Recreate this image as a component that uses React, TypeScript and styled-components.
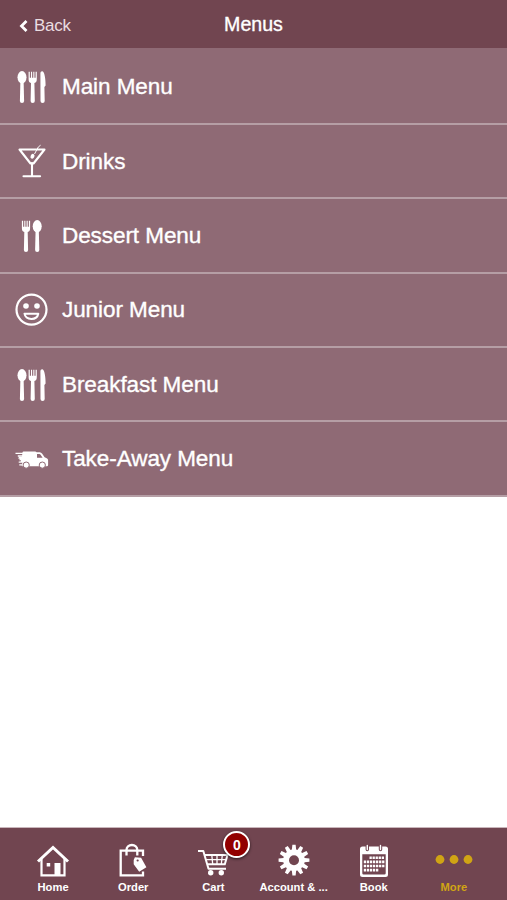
import React from "react";
import styled, { createGlobalStyle } from "styled-components";

const GlobalStyle = createGlobalStyle`
  * { box-sizing: border-box; }
  html, body { margin: 0; background: #fff; }
  body { font-family: "Liberation Sans", Arial, sans-serif; color: #fff; }
`;

const Screen = styled.div`
  display: flex;
  flex-direction: column;
  height: 100vh;
  overflow: hidden;
  background: #fff;
`;

const Header = styled.header`
  flex: none;
  display: grid;
  grid-template-columns: 1fr auto 1fr;
  align-items: start;
  height: 48px;
  background: #714550;
`;

const BackButton = styled.button`
  display: flex;
  align-items: center;
  gap: 5px;
  margin: 16px 0 0 19px;
  padding: 0;
  border: 0;
  background: none;
  color: #eadde1;
  font: 17px/20px "Liberation Sans", Arial, sans-serif;
  letter-spacing: -0.25px;
`;

const Title = styled.h1`
  margin: 12px 0 0;
  font-size: 19.6px;
  line-height: 24px;
  font-weight: 400;
  -webkit-text-stroke: 0.35px #fff;
`;

const MenuList = styled.nav`
  flex: none;
  display: flex;
  flex-direction: column;
  padding-top: 2.5px;
  background: #8f6a75;
`;

const MenuRow = styled.a`
  display: flex;
  align-items: center;
  height: 74.4px;
  padding-top: 1px;
  background: #8f6a75;
  border-bottom: 2px solid #b59ea5;
`;

const MenuIcon = styled.svg`
  flex: none;
  width: 62px;
  height: 74px;
  fill: #fff;
`;

const MenuLabel = styled.span`
  font-size: 22.5px;
  line-height: 28px;
  letter-spacing: -0.07px;
  -webkit-text-stroke: 0.35px #fff;
`;

const Content = styled.main`
  flex: 1;
`;

const TabBar = styled.footer`
  flex: none;
  display: grid;
  grid-template-columns: repeat(6, 1fr);
  height: 73px;
  padding: 0 13px;
  background: #714550;
  border-top: 1px solid #c9b6bb;
`;

const Tab = styled.a<{ $active?: boolean }>`
  position: relative;
  display: flex;
  flex-direction: column;
  align-items: center;
  padding-top: 12px;
  color: ${(p) => (p.$active ? "#d0a414" : "#fff")};
`;

const TabIcon = styled.svg`
  width: 40px;
  height: 40px;
  fill: currentColor;
`;

const TabLabel = styled.span`
  margin-top: 1px;
  font-size: 11.2px;
  line-height: 13px;
  font-weight: 700;
  white-space: nowrap;
`;

const Badge = styled.span`
  position: absolute;
  top: 3px;
  left: 50%;
  margin-left: 10px;
  width: 27px;
  height: 27px;
  border: 2px solid #fff;
  border-radius: 50%;
  background: #920000;
  box-shadow: 0 1px 3px rgba(0, 0, 0, 0.65);
  font-size: 14px;
  line-height: 24px;
  font-weight: 700;
  text-align: center;
`;

const Spoon = ({ x }: { x: number }) => (
  <g transform={`translate(${x} 0)`}>
    <ellipse cx="0" cy="27.3" rx="4.5" ry="6.2" />
    <path d="M-1.6 31h3.2l.5 20a2.1 2.1 0 0 1-4.2 0Z" />
  </g>
);

const Fork = ({ x }: { x: number }) => (
  <g transform={`translate(${x} 0)`}>
    <path d="M-4.1 21.8h1.2v6h1.2v-6h1.1v6h1.2v-6h1.1v6h1.2v-6h1.2v7.2c0 2.4-.6 3.5-2.4 4L2.1 51a2.1 2.1 0 0 1-4.2 0l.4-18c-1.8-.5-2.4-1.6-2.4-4Z" />
  </g>
);

const Cutlery = () => (
  <>
    <Spoon x={22} />
    <Fork x={32.7} />
    <path d="M40.4 23.2c0-1.5 1-2.2 2-2 2.2.8 3.2 7.5 3.2 14.3l-1.2 1.5.3 14a2.1 2.1 0 0 1-4.2 0Z" />
  </>
);

const Cocktail = () => (
  <g fill="none" stroke="#fff" strokeWidth="2.1">
    <path d="M19.5 24.5H44.5L33.5 38.5H30.5Z" strokeLinejoin="round" />
    <path d="M32 38v13M23.5 51.3h16.6" strokeLinecap="round" />
    <path d="M34.5 29l3.8-7 2.3-1.8" strokeWidth="1" />
    <ellipse cx="32.5" cy="31.3" rx="1.9" ry="2.5" transform="rotate(25 32.5 31.3)" fill="#fff" stroke="none" />
  </g>
);

const DessertCutlery = () => (
  <>
    <Fork x={26} />
    <Spoon x={37.2} />
  </>
);

const Smile = () => (
  <>
    <circle cx="31.5" cy="36.6" r="15" fill="none" stroke="#fff" strokeWidth="2.2" />
    <circle cx="26" cy="33" r="2.8" />
    <circle cx="37" cy="33" r="2.8" />
    <path d="M24.5 40.7h13.8c-.7 3.6-3.3 5.2-6.9 5.2s-6.3-1.6-6.9-5.2Z" fill="none" stroke="#fff" strokeWidth="2" strokeLinejoin="round" />
  </>
);

const Van = () => (
  <>
    <path d="M23.5 29.5h11.6q1 0 1.5.7h3.1q1.5 0 2.5 1.5l2.4 3.6 2.5 1.2q1 .6 1 2v4.5q0 1.3-1.3 1.3h-24q-1.3 0-1.1-1.3l1-3h-2.2l.5-1.7h-1.8l.6-1.6h-1.5l.6-2h3l.6-4.2q.1-1 1-1Z" />
    <path d="M15.5 31.4h8M17.8 34h5M18.7 40.2h5M19.3 42.8h4" stroke="#fff" strokeWidth="1.3" />
    <path d="M37 32h2.3q.8 0 1.3.8l2 3H37Z" fill="#8f6a75" />
    <circle cx="26.2" cy="43.1" r="3.1" stroke="#8f6a75" strokeWidth="1" />
    <circle cx="42.3" cy="43.1" r="3.1" stroke="#8f6a75" strokeWidth="1" />
  </>
);

const HomeIcon = () => (
  <>
    <path d="M5 21.5 20 7.5l15 14" fill="none" stroke="currentColor" strokeWidth="3" />
    <path d="M8.5 19v16.3h23V19" fill="none" stroke="currentColor" strokeWidth="2.2" />
    <path d="M21.5 23h6v12h-6ZM13.7 23h3.5v3.5h-3.5Z" />
  </>
);

const BagIcon = () => (
  <>
    <path d="M30 16v-5.3H7.7v24.6H30V31.5" fill="none" stroke="currentColor" strokeWidth="2.3" />
    <path d="M13.5 15.5V10a5.4 5 0 0 1 10.8 0v5.5" fill="none" stroke="currentColor" strokeWidth="2.3" />
    <path fillRule="evenodd" d="m20.7 20 1.2-2.8 6.2.6 5.3 9.4-7.2 4.6-5.5-7.5Zm3.9-.6a1.1 1.1 0 1 0 .1 2.2 1.1 1.1 0 0 0-.1-2.2Z" />
  </>
);

const CartIcon = () => (
  <>
    <g fill="none" stroke="currentColor" strokeWidth="2">
      <path d="M5 11h5.3l5.2 17.7H33" strokeLinejoin="round" />
      <path d="M11.5 15H34.5l-2.7 9.2H14.5" />
      <path d="M12.8 19.6h20.2M18.8 15l.9 9.2M24 15v9.2M29.3 15l-1 9.2" strokeWidth="1.3" />
    </g>
    <circle cx="17.7" cy="32.7" r="2.7" />
    <circle cx="28.3" cy="32.7" r="2.7" />
  </>
);

const gearPoints = Array.from({ length: 12 }, (_, i) =>
  [[-11.5, 10.8], [-6, 15.5], [6, 15.5], [11.5, 10.8]].map(([deg, r]) => {
    const a = ((i * 30 + deg) * Math.PI) / 180;
    return `${(20 + r * Math.sin(a)).toFixed(2)},${(20.2 - r * Math.cos(a)).toFixed(2)}`;
  })
).flat().join(" ");

const GearIcon = () => (
  <>
    <polygon points={gearPoints} />
    <circle cx="20" cy="20.2" r="5" fill="#714550" />
  </>
);

const CalendarIcon = () => (
  <>
    <path fillRule="evenodd" d="M8.5 6.5H31.5Q34 6.5 34 9v25.5Q34 37 31.5 37H8.5Q6 37 6 34.5V9Q6 6.5 8.5 6.5ZM8.3 14.3v18.9q0 1.3 1.3 1.3h20.8q1.3 0 1.3-1.3V14.3Z" />
    <path d="M15.5 17.8h15M9.8 21.9h20.7M9.8 26h20.7M9.8 30.1h14.5" fill="none" stroke="currentColor" strokeWidth="2.6" strokeDasharray="2.3 .75" />
    <g fill="none">
      <path d="M13.3 6v3.5M26.5 6v3.5" stroke="#714550" strokeWidth="3.4" strokeLinecap="round" />
      <path d="M13.3 5.5v4M26.5 5.5v4" stroke="#fff" strokeWidth="1.4" strokeLinecap="round" />
    </g>
  </>
);

const MoreIcon = () => (
  <>
    <circle cx="6" cy="19.5" r="4.4" />
    <circle cx="20" cy="19.5" r="4.4" />
    <circle cx="34" cy="19.5" r="4.4" />
  </>
);

const menus = [
  { label: "Main Menu", Icon: Cutlery },
  { label: "Drinks", Icon: Cocktail },
  { label: "Dessert Menu", Icon: DessertCutlery },
  { label: "Junior Menu", Icon: Smile },
  { label: "Breakfast Menu", Icon: Cutlery },
  { label: "Take-Away Menu", Icon: Van },
];

const tabs = [
  { label: "Home", Icon: HomeIcon },
  { label: "Order", Icon: BagIcon },
  { label: "Cart", Icon: CartIcon, badge: "0" },
  { label: "Account & ...", Icon: GearIcon },
  { label: "Book", Icon: CalendarIcon },
  { label: "More", Icon: MoreIcon, active: true },
];

export default function App() {
  return (
    <Screen>
      <GlobalStyle />
      <Header>
        <BackButton>
          <svg width="10" height="14" viewBox="0 0 10 14" fill="none">
            <path d="M7.5 2 2.5 7l5 5" stroke="#fff" strokeWidth="2.8" />
          </svg>
          Back
        </BackButton>
        <Title>Menus</Title>
      </Header>
      <MenuList>
        {menus.map(({ label, Icon }) => (
          <MenuRow key={label}>
            <MenuIcon viewBox="0 0 62 74"><Icon /></MenuIcon>
            <MenuLabel>{label}</MenuLabel>
          </MenuRow>
        ))}
      </MenuList>
      <Content />
      <TabBar>
        {tabs.map(({ label, Icon, badge, active }) => (
          <Tab key={label} $active={active}>
            <TabIcon viewBox="0 0 40 40"><Icon /></TabIcon>
            <TabLabel>{label}</TabLabel>
            {badge && <Badge>{badge}</Badge>}
          </Tab>
        ))}
      </TabBar>
    </Screen>
  );
}
